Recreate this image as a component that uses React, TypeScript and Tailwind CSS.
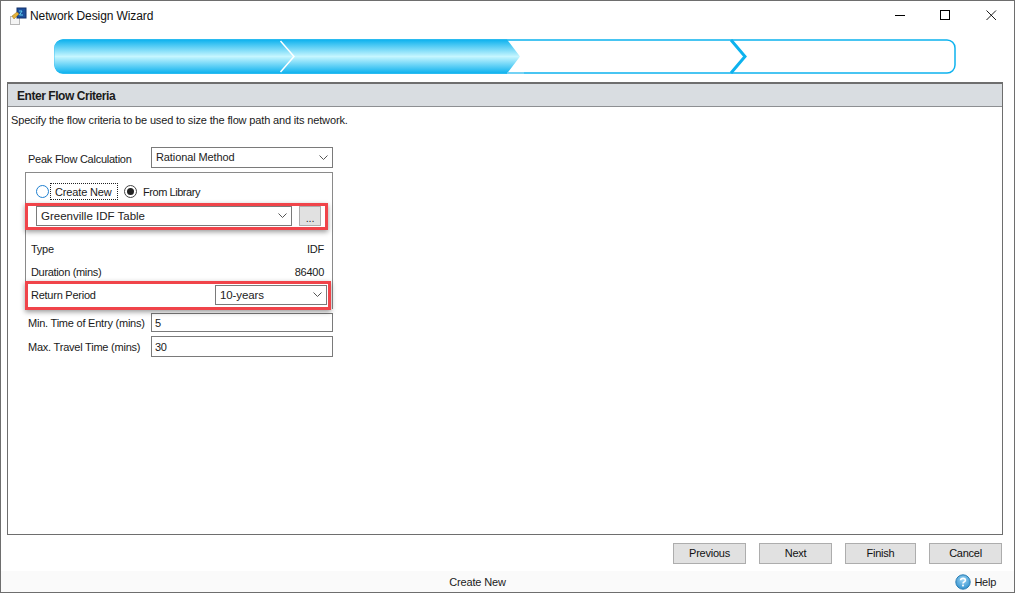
import React from "react";

const Chevron = () => (
  <svg width="9" height="6" viewBox="0 0 9 6" className="shrink-0">
    <path d="M0.5 0.5 L4.5 4.5 L8.5 0.5" fill="none" stroke="#555" strokeWidth="1" />
  </svg>
);

function Select({ label, className, textClass }: { label: string; className: string; textClass: string }) {
  return (
    <div className={`flex items-center justify-between bg-white border border-[#7a7a7a] pl-1 pr-[4px] text-[#222] ${className}`}>
      <span className={textClass}>{label}</span>
      <Chevron />
    </div>
  );
}

function Btn({ label, className }: { label: string; className: string }) {
  return (
    <div className={`h-[21px] flex items-center justify-center bg-[#e1e1e1] border border-[#adadad] text-[#111] ${className}`}>
      {label}
    </div>
  );
}

const Progress = () => (
  <svg width="902" height="35" viewBox="0 0 902 35" className="block">
    <defs>
      <linearGradient id="g" x1="0" y1="0" x2="0" y2="1">
        <stop offset="0" stopColor="#0cb1ee" />
        <stop offset="0.5" stopColor="#c6f6ff" />
        <stop offset="1" stopColor="#0cb1ee" />
      </linearGradient>
    </defs>
    <rect x="1" y="1" width="900" height="33" rx="8" fill="#fff" stroke="#0db2ee" strokeWidth="1.5" />
    <path d="M9 0.5 H453 L466 17.5 L453 34.5 H9 A8.5 8.5 0 0 1 0.5 26 V9 A8.5 8.5 0 0 1 9 0.5 Z" fill="url(#g)" />
    <path d="M226.5 2 L240 17.5 L226.5 33" fill="none" stroke="#fff" strokeWidth="1.5" />
    <path d="M453 34 H470" stroke="#9fdff7" strokeWidth="1" />
    <path d="M677 1 L691 17.5 L677 34" fill="none" stroke="#0db2ee" strokeWidth="3" />
  </svg>
);

const AppIcon = () => (
  <svg width="19" height="18" viewBox="0 0 19 18" className="shrink-0">
    <rect x="1.5" y="9.5" width="9" height="8" fill="#f4f4f4" stroke="#777" strokeDasharray="1 1" />
    <rect x="8" y="1" width="9" height="10" fill="#1c4f9c" stroke="#12306b" />
    <path d="M10 4 H13 L10.5 8 H14" fill="none" stroke="#5fd0f0" strokeWidth="1" />
    <path d="M3 9 L8 5 L10 7 L5 12 Z" fill="#e4b23a" stroke="#9a7420" strokeWidth="0.5" />
  </svg>
);

const HelpIcon = () => (
  <svg width="16" height="16" viewBox="0 0 16 16" className="shrink-0">
    <defs>
      <radialGradient id="h" cx="0.5" cy="0.35" r="0.7">
        <stop offset="0" stopColor="#9fd6f5" />
        <stop offset="1" stopColor="#2a8ccb" />
      </radialGradient>
    </defs>
    <circle cx="8" cy="8" r="7.2" fill="url(#h)" stroke="#2b7fb5" />
    <path d="M5.6 6.2 C5.8 3.8 10.4 3.8 10.4 6.2 C10.4 8 8 7.8 8 9.6" fill="none" stroke="#fff" strokeWidth="1.6" />
    <rect x="7.1" y="10.6" width="1.8" height="1.8" fill="#fff" />
  </svg>
);

export default function App() {
  return (
    <div className="w-[1015px] h-[593px] flex flex-col bg-white border border-[#6e6e6e] overflow-hidden text-[11px] leading-[14px] text-[#1a1a1a] font-['Liberation_Sans',Arial,sans-serif] tracking-[-0.25px]">
      {/* title bar */}
      <div className="h-[30px] shrink-0 flex items-center pl-[8px] text-[#111]">
        <AppIcon />
        <span className="ml-[2px] text-[12px] tracking-[-0.1px]">Network Design Wizard</span>
        <div className="ml-auto flex items-center mt-[-1px]">
          <svg width="11" height="11" viewBox="0 0 11 11" className="mr-[34px]"><path d="M0 5.5 H10" stroke="#000" /></svg>
          <svg width="11" height="11" viewBox="0 0 11 11" className="mr-[35px]"><rect x="0.5" y="0.5" width="9" height="9" fill="none" stroke="#000" /></svg>
          <svg width="11" height="11" viewBox="0 0 11 11" className="mr-[17px]"><path d="M0.5 0.5 L10 10 M10 0.5 L0.5 10" stroke="#000" strokeWidth="0.9" /></svg>
        </div>
      </div>

      {/* progress */}
      <div className="h-[51px] shrink-0 pl-[53px] pt-[8px]">
        <Progress />
      </div>

      {/* main panel */}
      <div className="relative ml-[6px] w-[996px] h-[453px] shrink-0 border border-[#6e6e6e] border-t-2 flex flex-col">
        <div className="h-[23px] shrink-0 bg-[#d9dde1] border-b border-[#8d8f92] flex items-center pl-[9px] pt-[2px] text-[12px] font-bold text-[#1b1b1b] tracking-[-0.45px]">
          Enter Flow Criteria
        </div>
        <div className="pl-[3px] pt-[6px] h-[21px] tracking-[-0.15px]">Specify the flow criteria to be used to size the flow path and its network.</div>

        <div className="w-[308px] ml-[17px] mt-[19px]">
          {/* peak flow */}
          <div className="flex items-center h-[21px] ml-[3px]">
            <span className="w-[123px] mt-[2px]">Peak Flow Calculation</span>
            <Select label="Rational Method" textClass="tracking-[-0.1px] mt-[-2px]" className="w-[182px] h-[21px]" />
          </div>

          {/* group box */}
          <div className="h-[137px] mt-[4px] border border-[#8a8a8a] border-b-0 flex flex-col">
            <div className="flex items-center h-[27px] mt-[5px] pl-[10px]">
              <span className="w-[13px] h-[13px] rounded-full border border-[#1f7fd0] bg-white shrink-0" />
              <span className="ml-[1px] px-[4px] h-[17px] w-[68px] flex items-center border border-dotted border-[#222] tracking-[-0.15px] whitespace-nowrap">Create New</span>
              <span className="ml-[6px] w-[13px] h-[13px] rounded-full border border-[#444] bg-white shrink-0 flex items-center justify-center">
                <span className="w-[7px] h-[7px] rounded-full bg-[#222]" />
              </span>
              <span className="ml-[6px] tracking-[-0.45px]">From Library</span>
            </div>
            <div className="flex items-center h-[20px] ml-[10px] mt-[1px]">
              <Select label="Greenville IDF Table" textClass="text-[11.5px] tracking-normal" className="w-[256px] h-[20px]" />
              <div className="ml-[7px] w-[22px] h-[20px] bg-[#e1e1e1] border border-[#adadad] flex items-end justify-center leading-[14px] text-[#333]">...</div>
            </div>
            <div className="flex justify-between items-center h-[14px] mt-[16px] pl-[5px] pr-[8px]">
              <span>Type</span>
              <span>IDF</span>
            </div>
            <div className="flex justify-between items-center h-[14px] mt-[9px] pl-[5px] pr-[8px]">
              <span className="tracking-[-0.33px]">Duration (mins)</span>
              <span>86400</span>
            </div>
            <div className="flex justify-between items-center h-[20px] mt-[6px] pl-[5px] pr-[5px]">
              <span>Return Period</span>
              <Select label="10-years" textClass="text-[11.5px] tracking-[-0.1px]" className="w-[112px] h-[20px]" />
            </div>
          </div>

          {/* inputs */}
          <div className="flex items-center h-[19px] mt-[4px] ml-[3px]">
            <span className="w-[123px] whitespace-nowrap tracking-[-0.22px]">Min. Time of Entry (mins)</span>
            <div className="w-[182px] h-[19px] bg-white border border-[#7a7a7a] pl-[3px] flex items-center">5</div>
          </div>
          <div className="flex items-center h-[21px] mt-[4px] ml-[3px]">
            <span className="w-[123px] whitespace-nowrap tracking-[-0.22px]">Max. Travel Time (mins)</span>
            <div className="w-[182px] h-[21px] bg-white border border-[#7a7a7a] pl-[3px] flex items-center">30</div>
          </div>
        </div>

        {/* red annotation boxes */}
        <div className="absolute left-[17px] top-[119px] w-[303px] h-[27px] border-[3px] border-[#f0444a] shadow-[0_2px_5px_rgba(0,0,0,0.4)]" />
        <div className="absolute left-[17px] top-[197px] w-[306px] h-[29px] border-[3px] border-[#f0444a] shadow-[0_2px_5px_rgba(0,0,0,0.4)]" />
      </div>

      {/* buttons */}
      <div className="h-[36px] shrink-0 flex items-center justify-end pr-[12px]">
        <Btn label="Previous" className="w-[73px]" />
        <Btn label="Next" className="w-[73px] ml-[13px]" />
        <Btn label="Finish" className="w-[71px] ml-[13px]" />
        <Btn label="Cancel" className="w-[73px] ml-[13px]" />
      </div>

      {/* status */}
      <div className="flex-1 bg-[#fafafa] relative flex items-center justify-center">
        <span className="mr-[60px] tracking-[-0.15px]">Create New</span>
        <div className="absolute right-[18px] top-[3px] flex items-center gap-[3px]">
          <HelpIcon />
          <span>Help</span>
        </div>
      </div>
    </div>
  );
}
